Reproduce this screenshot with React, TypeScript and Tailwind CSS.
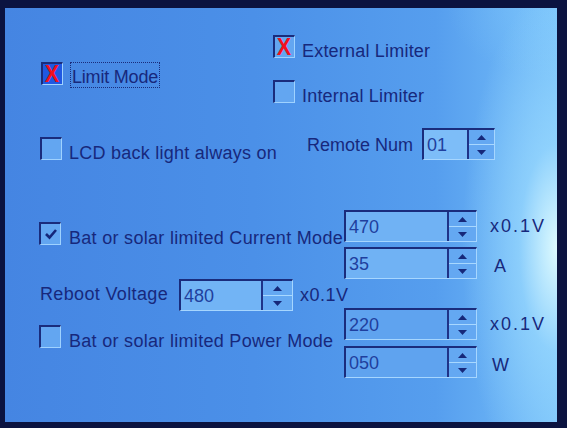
import React from "react";

const FONT = { fontFamily: '"Liberation Sans", Arial, sans-serif' };

function Box({ variant }: { variant: "x" | "xblue" | "check" | "empty" }) {
  const fill = variant === "xblue" ? "bg-[#1f58e2]" : "bg-[#63a6f1]";
  return (
    <div
      className={`relative w-[22px] h-[23px] shrink-0 border-t-2 border-l-2 border-b border-r border-t-[#1a2c7c] border-l-[#1a2c7c] border-b-[#9fd2ff] border-r-[#9fd2ff] ${fill} flex items-center justify-center overflow-visible`}
    >
      {variant === "x" || variant === "xblue" ? (
        <span className="text-[#f2101e] font-bold text-[24px] leading-none -mt-[1px] scale-x-90">X</span>
      ) : null}
      {variant === "check" ? (
        <svg width="14" height="12" viewBox="0 0 14 12">
          <polyline points="2,6 5.5,9.5 12,2" fill="none" stroke="#15277a" strokeWidth="2.6" />
        </svg>
      ) : null}
    </div>
  );
}

function Spin({ value, w, btn, editBg }: { value: string; w: string; btn: string; editBg: string }) {
  return (
    <div
      className={`${w} h-[32px] shrink-0 flex border-t-2 border-l-2 border-b border-r border-t-[#1a2c7c] border-l-[#1a2c7c] border-b-[#a6d6ff] border-r-[#a6d6ff]`}
    >
      <div className={`flex-1 flex items-center pl-[3px] ${editBg} text-[18px] text-[#1f3f9e] leading-none`}>{value}</div>
      <div className={`${btn} flex flex-col border-l-2 border-[#1f3388] bg-[#64a8f2]`}>
        <div className="flex-1 flex items-center justify-center border-b border-[#a8d8ff]">
          <svg width="9" height="5" viewBox="0 0 9 5">
            <polygon points="4.5,0 9,5 0,5" fill="#16287a" />
          </svg>
        </div>
        <div className="flex-1 flex items-center justify-center">
          <svg width="9" height="5" viewBox="0 0 9 5">
            <polygon points="0,0 9,0 4.5,5" fill="#16287a" />
          </svg>
        </div>
      </div>
    </div>
  );
}

function Label({ children, cls = "" }: { children: React.ReactNode; cls?: string }) {
  return <span className={`text-[18px] leading-[22px] text-[#17287c] whitespace-nowrap ${cls}`}>{children}</span>;
}

export default function App() {
  return (
    <div className="w-[567px] h-[428px] bg-[#0b1340] pt-[8px] pl-[5px] pr-[10px] pb-[6px] overflow-hidden" style={FONT}>
      <div className="w-full h-full flex flex-col pl-[34px] pt-[27px] bg-[radial-gradient(ellipse_95px_260px_at_100%_58%,rgba(225,252,255,0.97),rgba(160,222,255,0.6)_40%,rgba(120,190,255,0)_100%),radial-gradient(ellipse_110px_70px_at_100%_0%,rgba(140,210,255,0.35),rgba(140,210,255,0)_100%),linear-gradient(90deg,#4585e2_0%,#4b90e8_45%,#569eee_78%,#76c0fa_100%)]">
        {/* Row A */}
        <div className="flex items-start">
          <div className="w-[234px] shrink-0 pt-[27px] pl-[2px] flex items-start">
            <Box variant="xblue" />
            <span className="ml-[7px] border border-dotted border-[#1a2c7c] px-[1px] h-[26px] flex items-center">
              <Label cls="mt-[3px] tracking-[-0.2px]">Limit Mode</Label>
            </span>
          </div>
          <div className="flex flex-col gap-[22px]">
            <div className="flex items-start h-[23px]">
              <Box variant="x" />
              <Label cls="ml-[7px] mt-[5px] tracking-[0.2px]">External Limiter</Label>
            </div>
            <div className="flex items-start h-[23px]">
              <Box variant="empty" />
              <Label cls="ml-[7px] mt-[5px] tracking-[0.2px]">Internal Limiter</Label>
            </div>
          </div>
        </div>

        {/* Row B */}
        <div className="flex items-start mt-[25px] h-[32px]">
          <div className="w-[268px] shrink-0 pt-[9px] pl-[1px] flex items-start h-[32px]">
            <Box variant="empty" />
            <Label cls="ml-[7px] mt-[5px] tracking-[0.25px]">LCD back light always on</Label>
          </div>
          <div className="w-[115px] shrink-0 h-[32px] flex items-center">
            <Label cls="mt-[2px]">Remote Num</Label>
          </div>
          <Spin value="01" w="w-[73px]" btn="w-[27px]" editBg="bg-[#7dbdf8]" />
        </div>

        {/* Rows C-E */}
        <div className="flex items-start mt-[50px]">
          <div className="w-[305px] shrink-0 flex flex-col overflow-visible">
            <div className="flex items-start mt-[12px] h-[23px]">
              <Box variant="check" />
              <Label cls="ml-[8px] mt-[5px] tracking-[0.3px]">Bat or solar limited Current Mode</Label>
            </div>
            <div className="flex items-center mt-[34px] h-[32px]">
              <div className="w-[140px] shrink-0 pl-[1px]">
                <Label cls="tracking-[0.35px]">Reboot Voltage</Label>
              </div>
              <Spin value="480" w="w-[114px]" btn="w-[31px]" editBg="bg-[#72b4f5]" />
              <Label cls="ml-[7px] tracking-[0.5px] text-[#1e3283]">x0.1V</Label>
            </div>
            <div className="flex items-start mt-[14px] h-[23px]">
              <Box variant="empty" />
              <Label cls="ml-[8px] mt-[5px] tracking-[0.3px]">Bat or solar limited Power Mode</Label>
            </div>
          </div>
          <div className="flex flex-col">
            <div className="flex items-center">
              <Spin value="470" w="w-[133px]" btn="w-[29px]" editBg="bg-[#70b2f4]" />
              <Label cls="ml-[13px] tracking-[2px] text-[#8cc0ec]">x0.1V</Label>
            </div>
            <div className="flex items-center mt-[5px]">
              <Spin value="35" w="w-[133px]" btn="w-[29px]" editBg="bg-[#70b2f4]" />
              <Label cls="ml-[17px] mt-[6px] text-[#2d52aa]">A</Label>
            </div>
            <div className="flex items-center mt-[29px]">
              <Spin value="220" w="w-[133px]" btn="w-[29px]" editBg="bg-[#5fa3ef]" />
              <Label cls="ml-[13px] tracking-[2px] text-[#8cc0ec]">x0.1V</Label>
            </div>
            <div className="flex items-center mt-[6px]">
              <Spin value="050" w="w-[133px]" btn="w-[29px]" editBg="bg-[#5fa3ef]" />
              <Label cls="ml-[15px] mt-[6px] text-[#2d52aa]">W</Label>
            </div>
          </div>
        </div>
      </div>
    </div>
  );
}
